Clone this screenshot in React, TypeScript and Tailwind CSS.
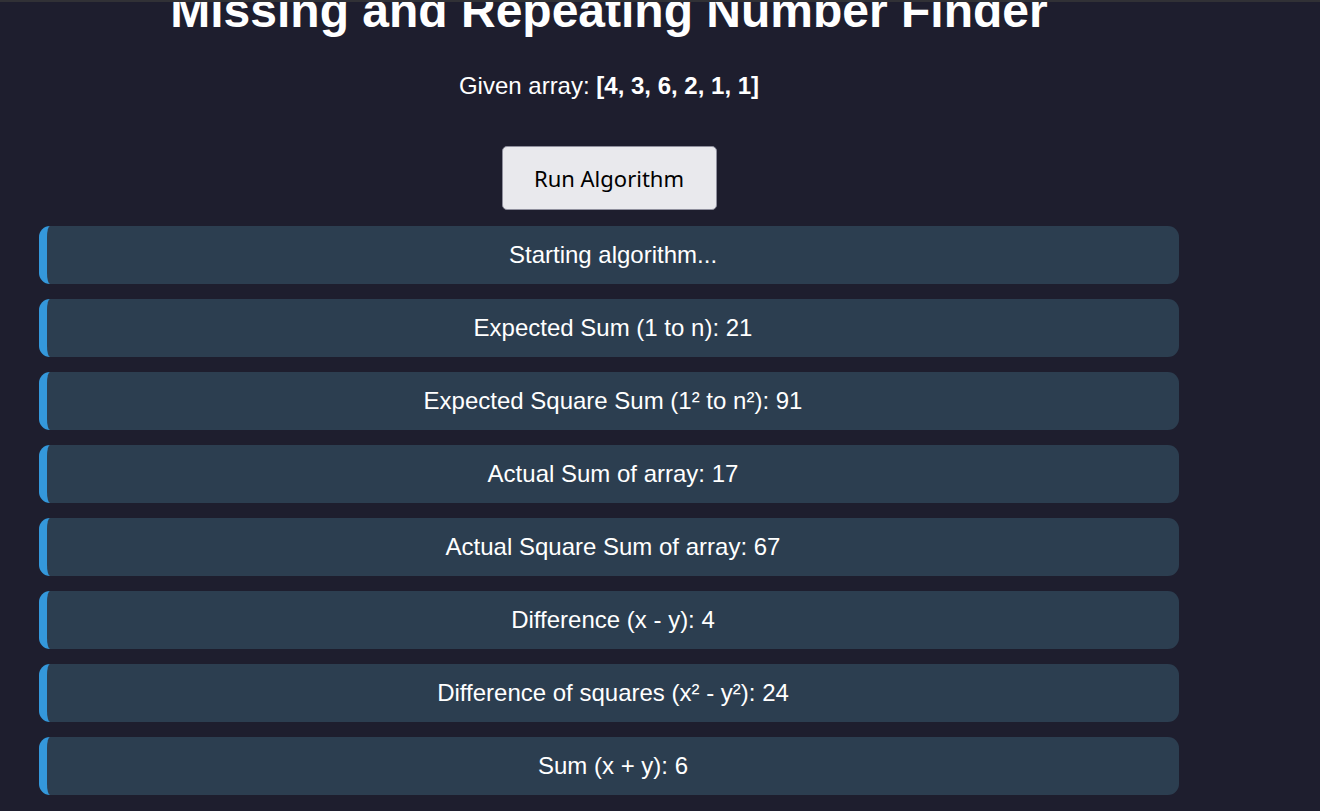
const steps = [
  'Starting algorithm...',
  'Expected Sum (1 to n): 21',
  'Expected Square Sum (1² to n²): 91',
  'Actual Sum of array: 17',
  'Actual Square Sum of array: 67',
  'Difference (x - y): 4',
  'Difference of squares (x² - y²): 24',
  'Sum (x + y): 6',
];

const arr = [4, 3, 6, 2, 1, 1];

export default function App() {
  return (
    <div className="h-[811px] overflow-hidden bg-[#1e1e2e] text-white font-['Liberation_Sans',Arial,sans-serif]">
      <div className="relative z-10 h-[2px] bg-[#313136]" />
      <div className="ml-[39px] w-[1140px] -mt-[19px] flex flex-col items-center">
        <h1 className="text-[48px] font-bold leading-[55px] whitespace-nowrap">
          Missing and Repeating Number Finder
        </h1>
        <p className="mt-[34px] text-[24px] leading-[28px]">
          Given array: <strong className="font-bold">[{arr.join(', ')}]</strong>
        </p>
        <button
          type="button"
          className="mt-[46px] flex h-[64px] w-[215px] items-center justify-center rounded-[5px] border border-[#8f8f9d] bg-[#e9e9ed] text-[22px] text-black font-['Noto_Sans','Open_Sans',sans-serif]"
        >
          Run Algorithm
        </button>
        <div className="mt-[16px] flex w-full flex-col gap-[15px]">
          {steps.map((s) => (
            <div
              key={s}
              className="rounded-[11px] border-l-[8px] border-[#3498db] bg-[#2c3e50] py-[15px] text-center text-[24px] leading-[28px]"
            >
              {s}
            </div>
          ))}
        </div>
      </div>
    </div>
  );
}
